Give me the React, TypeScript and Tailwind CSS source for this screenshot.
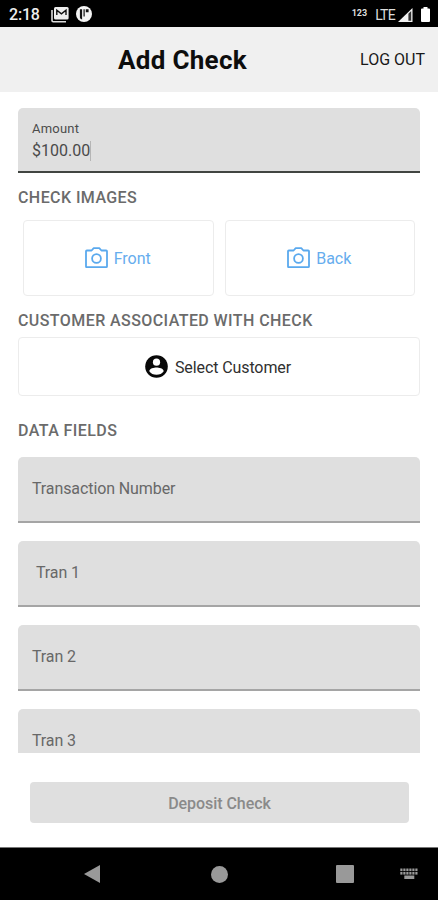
import type { ReactNode } from "react";

function StatusBar() {
  return (
    <div className="flex h-[27px] shrink-0 items-center bg-black pl-[9px] pr-[8px] text-white">
      <span className="mt-[2px] w-[42px] text-[16px] leading-5 font-medium tracking-[-0.2px] text-[#eee]">2:18</span>
      <svg className="mt-px h-[17px] w-[18px]" viewBox="0 0 18 17" fill="none">
        <path d="M1 4v10.5q0 1.2 1.2 1.2H15" stroke="#ddd" strokeWidth="1.6" />
        <rect x="3" y="1" width="14.6" height="12.4" rx="1.5" fill="#eee" />
        <path d="M5.8 9V4.2l4.6 3.6L15 4.2V9" stroke="#111" strokeWidth="1.4" />
      </svg>
      <svg className="ml-[7px] mt-px h-4 w-4" viewBox="0 0 16 16">
        <circle cx="8" cy="8" r="8" fill="#f4f4f4" />
        <path d="M3.9 3.3h2.2v10.2q-2.2-.5-2.2-2zM7.5 3.3h1.2v7.2H7.5zM9.8 3.3h2.8v2.9H9.8z" fill="#111" />
      </svg>
      <span className="ml-auto mb-[1px] text-[9px] leading-3 font-bold text-[#ddd]">123</span>
      <span className="ml-[8px] mt-[2px] text-[14px] leading-4 tracking-[-0.7px] text-[#ddd]">LTE</span>
      <svg className="ml-[3px] mt-[2px] h-[14px] w-[15px]" viewBox="0 0 15 14">
        <path d="M0 14 14.5 0v14z" fill="#f2f2f2" />
        <path d="M10.4 5.8 13.2 3v9.7h-2.8z" fill="#333" />
      </svg>
      <svg className="ml-[8px] mt-px h-[15px] w-[9px]" viewBox="0 0 9 15">
        <path d="M2.5 1.5V0h4v1.5H8q1 0 1 1V14q0 1-1 1H1q-1 0-1-1V2.5q0-1 1-1z" fill="#fff" />
      </svg>
    </div>
  );
}

function CameraIcon() {
  return (
    <svg className="h-[22px] w-[23px]" viewBox="0 0 23 22" fill="none" stroke="#5aa9ee" strokeWidth="1.8" strokeLinejoin="round">
      <path d="M1 4.2Q1 3.5 1.8 3.5h4.8L8.7 1.2h5.6l2.1 2.3h4.8q.8 0 .8.7v15.2q0 .8-.8.8H1.8q-.8 0-.8-.8z" />
      <circle cx="11.5" cy="11.5" r="4.4" />
    </svg>
  );
}

function SectionTitle({ children }: { children: ReactNode }) {
  return (
    <h2 className="text-[16px] leading-5 font-medium tracking-[0.42px] whitespace-nowrap text-[#6b6b6b]">{children}</h2>
  );
}

function PhotoButton({ label }: { label: string }) {
  return (
    <button className="flex h-[76px] flex-1 items-center justify-center gap-[6px] rounded-[4px] border-[1.5px] border-[#ececec] pr-[1px] text-[16px] text-[#66adee]">
      <CameraIcon />
      <span className="mt-[1px]">{label}</span>
    </button>
  );
}

function Field({ label, indent = false }: { label: string; indent?: boolean }) {
  return (
    <div
      className={`flex h-[66px] shrink-0 items-center rounded-t-[5px] border-b-2 border-[#a5a5a5] bg-[#dfdfdf] text-[16px] tracking-[-0.1px] text-[#686868] ${indent ? "pl-[18px]" : "pl-[14px]"}`}
    >
      <span>{label}</span>
    </div>
  );
}

function NavBar() {
  return (
    <div className="flex h-[53px] shrink-0 items-center border-t border-[#777] bg-black pl-[84px] pr-[20px]">
      <svg className="h-[18px] w-[17px]" viewBox="0 0 17 18">
        <path d="M0 9 16 0v18z" fill="#999" />
      </svg>
      <span className="ml-[110px] h-[17px] w-[17px] rounded-full bg-[#999]" />
      <span className="ml-[108px] h-[18px] w-[18px] rounded-[1px] bg-[#999]" />
      <svg className="ml-auto h-[12px] w-[18px]" viewBox="0 0 18 12" fill="#999">
        {[0, 3, 6, 9, 12, 15].map((x) => (
          <g key={x}>
            <rect x={x + 0.3} y="0.5" width="2.2" height="2.6" />
            <rect x={x + 0.3} y="4" width="2.2" height="2.6" />
          </g>
        ))}
        <rect x="4.3" y="7.5" width="10" height="3.5" />
      </svg>
    </div>
  );
}

export default function App() {
  return (
    <div className="flex h-[900px] w-[438px] flex-col overflow-hidden bg-white font-[Roboto,sans-serif]">
      <StatusBar />
      <header className="flex h-[65px] shrink-0 items-center justify-between bg-[#f0f0f0] pl-[118px] pr-[13px]">
        <h1 className="text-[26px] leading-8 font-bold tracking-[0.3px] whitespace-nowrap text-[#0d0d0d]">Add Check</h1>
        <button className="text-[16px] leading-5 whitespace-nowrap text-[#181818]">LOG OUT</button>
      </header>
      <main className="flex h-[661px] shrink-0 flex-col overflow-hidden px-[18px] pt-[16px]">
        <div className="flex h-[65px] shrink-0 flex-col rounded-t-[5px] border-b-[2.5px] border-[#414541] bg-[#dfdfdf] pt-[12px] pl-[14px]">
          <span className="text-[13px] leading-[18px] tracking-[0.2px] text-[#4c4c4c]">Amount</span>
          <div className="mt-[3px] flex items-center text-[16px] leading-5 text-[#4a4a4a]">
            $100.00
            <span className="h-5 w-px bg-[#b5b5b5]" />
          </div>
        </div>
        <div className="mt-[15px]">
          <SectionTitle>CHECK IMAGES</SectionTitle>
        </div>
        <div className="mt-[12px] flex gap-[11px] pr-[5px] pl-[5px]">
          <PhotoButton label="Front" />
          <PhotoButton label="Back" />
        </div>
        <div className="mt-[15px]">
          <SectionTitle>CUSTOMER ASSOCIATED WITH CHECK</SectionTitle>
        </div>
        <button className="mt-[6px] flex h-[59px] shrink-0 items-center justify-center gap-[7px] rounded-[4px] border-[1.5px] border-[#ececec] pr-[2px] text-[16px] tracking-[-0.1px] text-[#303030]">
          <svg className="h-[23px] w-[23px]" viewBox="0 0 23 23">
            <circle cx="11.5" cy="11.5" r="11.3" fill="#080808" />
            <circle cx="11.5" cy="7.2" r="3.6" fill="#fff" />
            <path d="M4.3 16.2c0-2.5 4.8-3.6 7.2-3.6s7.2 1.1 7.2 3.6c-1.5 2.3-4.2 3.6-7.2 3.6s-5.7-1.3-7.2-3.6z" fill="#fff" />
          </svg>
          <span className="mt-[2px]">Select Customer</span>
        </button>
        <div className="mt-[25px]">
          <SectionTitle>DATA FIELDS</SectionTitle>
        </div>
        <div className="mt-[16px] flex flex-col gap-[18px]">
          <Field label="Transaction Number" />
          <Field label="Tran 1" indent />
          <Field label="Tran 2" />
          <Field label="Tran 3" />
        </div>
      </main>
      <footer className="flex flex-1 flex-col px-[30px] pt-[29px]">
        <button className="h-[41px] w-[379px] rounded-[4px] bg-[#dfdfdf] pt-[2px] text-[16px] font-medium tracking-[-0.05px] text-[#8a8a8a]">
          Deposit Check
        </button>
      </footer>
      <NavBar />
    </div>
  );
}
